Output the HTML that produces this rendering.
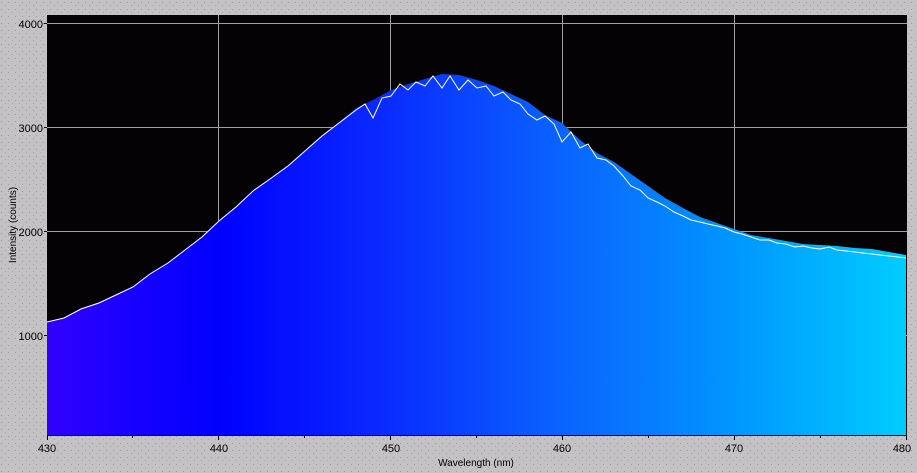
<!DOCTYPE html>
<html><head><style>
html,body{margin:0;padding:0;width:917px;height:473px;overflow:hidden;background:#c4c2c4;font-family:"Liberation Sans",sans-serif;}
</style></head><body>
<svg width="917" height="473" xmlns="http://www.w3.org/2000/svg" style="position:absolute;left:0;top:0">
<defs>
<pattern id="dots" width="7" height="7" patternUnits="userSpaceOnUse"><rect width="7" height="7" fill="#c4c2c4"/><rect x="1" y="2" width="1" height="1" fill="#9a989a"/><rect x="5" y="5" width="1" height="1" fill="#a8a6a8"/></pattern>
<linearGradient id="g" x1="47" x2="906" y1="0" y2="0" gradientUnits="userSpaceOnUse">
<stop offset="0" stop-color="#3000ff"/>
<stop offset="0.2" stop-color="#0000ff"/>
<stop offset="0.4" stop-color="#0a2cff"/>
<stop offset="0.6" stop-color="#0a64ff"/>
<stop offset="0.8" stop-color="#0096ff"/>
<stop offset="1" stop-color="#00cdff"/>
</linearGradient>
</defs>
<rect width="917" height="473" fill="url(#dots)"/>
<rect x="47" y="15" width="860" height="420" fill="#040204"/>
<g stroke="#a0a0a0" stroke-width="1">
<line x1="47" y1="23.5" x2="907" y2="23.5"/><line x1="47" y1="127.5" x2="907" y2="127.5"/><line x1="47" y1="231.5" x2="907" y2="231.5"/><line x1="47" y1="335.5" x2="907" y2="335.5"/>
<line x1="218.5" y1="15" x2="218.5" y2="435"/><line x1="390.5" y1="15" x2="390.5" y2="435"/><line x1="562.5" y1="15" x2="562.5" y2="435"/><line x1="734.5" y1="15" x2="734.5" y2="435"/>
</g>
<polygon fill="url(#g)" points="47,435 47,322 64,318 81,308 99,302 116,294 133,286 150,273 168,262 185,249 202,236 219,220 236,206 253,190 270,178 288,165 305,150 322,135 339,122 356,108 373,100 391,90 408,84 425,79 442,74 459,75 477,80 494,86 511,94 528,102 545,115 562,123 580,140 597,153 614,162 631,174 648,186 665,198 683,208 700,217 717,223 734,229 751,235 769,238 786,241 803,244 820,245 837,246 855,248 872,249 889,252 906,255 906,435"/>
<polyline fill="none" stroke="#fff" stroke-width="1" points="47,322 64,318 81,309 99,303 116,295 133,287 150,274 168,263 185,250 202,237 219,221 236,207 253,191 270,179 288,166 305,151 322,136 339,123 356,110 365,104 373,118 382,98 391,96 400,84 408,90 416,82 425,86 433,76 442,88 450,76 459,90 468,80 477,88 486,86 494,96 503,92 511,100 520,104 528,114 537,120 545,116 554,124 562,142 571,132 580,148 588,144 597,158 606,160 614,166 623,176 631,186 640,190 648,198 657,202 665,206 674,212 683,216 691,220 700,222 708,224 717,226 725,228 734,232 742,234 751,237 760,240 769,240 777,243 786,244 795,247 803,246 812,248 820,249 829,247 837,250 846,251 855,252 863,253 872,254 880,255 889,256 898,257 906,258"/>
<g stroke="#000" stroke-width="1">
<line x1="47" y1="435.5" x2="907" y2="435.5"/>
<line x1="47.5" y1="435" x2="47.5" y2="440"/><line x1="132.5" y1="435" x2="132.5" y2="438"/><line x1="218.5" y1="435" x2="218.5" y2="440"/><line x1="304.5" y1="435" x2="304.5" y2="438"/><line x1="390.5" y1="435" x2="390.5" y2="440"/><line x1="476.5" y1="435" x2="476.5" y2="438"/><line x1="562.5" y1="435" x2="562.5" y2="440"/><line x1="648.5" y1="435" x2="648.5" y2="438"/><line x1="734.5" y1="435" x2="734.5" y2="440"/><line x1="820.5" y1="435" x2="820.5" y2="438"/><line x1="906.5" y1="435" x2="906.5" y2="440"/>
<line x1="44" y1="23.5" x2="47" y2="23.5"/><line x1="44" y1="127.5" x2="47" y2="127.5"/><line x1="44" y1="231.5" x2="47" y2="231.5"/><line x1="44" y1="335.5" x2="47" y2="335.5"/>
</g>
<g font-size="11" fill="#000" font-family="Liberation Sans, sans-serif">
<text x="43" y="28" text-anchor="end">4000</text><text x="43" y="132" text-anchor="end">3000</text><text x="43" y="236" text-anchor="end">2000</text><text x="43" y="340" text-anchor="end">1000</text>
<text x="47" y="452" text-anchor="middle">430</text><text x="219" y="452" text-anchor="middle">440</text><text x="391" y="452" text-anchor="middle">450</text><text x="562" y="452" text-anchor="middle">460</text><text x="734" y="452" text-anchor="middle">470</text><text x="902" y="452" text-anchor="middle">480</text>
<text x="476" y="466" text-anchor="middle" font-size="10">Wavelength (nm)</text>
<text transform="translate(16,225) rotate(-90)" text-anchor="middle" font-size="10">Intensity (counts)</text>
</g>
</svg>
</body></html>
